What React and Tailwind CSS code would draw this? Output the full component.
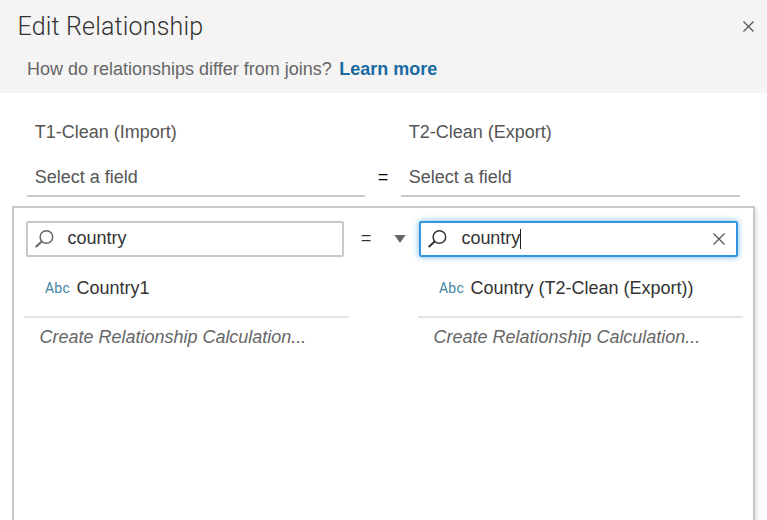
function Search({ className }) {
  return (
    <svg className={className} width="20" height="20" viewBox="0 0 20 20" fill="none" stroke="currentColor">
      <circle cx="12.4" cy="8" r="6.3" strokeWidth="1.5" />
      <path d="M8 12.2 L1.7 18" strokeWidth="2" />
    </svg>
  );
}

function Close({ size, width = 1.3 }) {
  return (
    <svg width={size} height={size} viewBox="0 0 12 12" fill="none" stroke="#555" strokeWidth={width} className="block">
      <path d="M.5 .5 L11.5 11.5 M11.5 .5 L.5 11.5" />
    </svg>
  );
}

function Results({ name, className }) {
  return (
    <div className={"w-[325px] " + className}>
      <div className="flex h-[59px] items-center border-b-2 border-[#e4e4e4] pl-[21px] pt-px">
        <span className="w-[31.5px] font-['Roboto',sans-serif] text-[14px] tracking-[0.2px] text-[#3f83a3]">Abc</span>
        <span className="text-[18px] text-[#333]">{name}</span>
      </div>
      <div className="pl-[15.5px] pt-[6px] text-[18px] leading-[26px] tracking-[-0.01px] italic text-[#666]">Create Relationship Calculation...</div>
    </div>
  );
}

function Field({ table, className }) {
  return (
    <div className={"h-[104px] border-b-2 border-[#c9c9c9] pl-[7.7px] pt-[26px] text-[18px] text-[#555] " + className}>
      <div className="leading-[26px]">{table}</div>
      <div className="mt-[19px] leading-[26px]">Select a field</div>
    </div>
  );
}

export default function App() {
  return (
    <div className="flex h-[520px] w-[767px] flex-col overflow-hidden whitespace-nowrap bg-white font-['Liberation_Sans',sans-serif]">
      <header className="h-[93px] shrink-0 bg-[#f4f4f4]">
        <div className="flex items-center justify-between pl-[17.5px] pr-[13px] pt-[10px]">
          <h1 className="font-['Roboto',sans-serif] text-[25px] leading-[30px] pt-[2px] font-light tracking-[0.18px] text-[#333]">Edit Relationship</h1>
          <Close size={11} width={1.3} />
        </div>
        <p className="pl-[27px] pt-[14px] text-[18px] leading-[26px] text-[#666]">
          How do relationships differ from joins?
          <span className="ml-[7.5px] font-bold text-[#1a6aa3]">Learn more</span>
        </p>
      </header>
      <section className="flex shrink-0 pl-[27px]">
        <Field table="T1-Clean (Import)" className="w-[338px]" />
        <div className="w-9 pt-[71px] text-center text-[18px] leading-[26px] text-black">=</div>
        <Field table="T2-Clean (Export)" className="w-[339px]" />
      </section>
      <section className="ml-3 mt-[9px] h-[340px] w-[743px] shrink-0 border-2 border-[#c8c8c8] bg-white pt-[13px] shadow-[2px_2px_4px_rgba(0,0,0,0.12)]">
        <div className="flex items-center pl-3">
          <div className="flex h-9 w-[318px] items-center rounded-[2px] border-2 border-[#c8c8c8] pl-[6px]">
            <Search className="text-[#666]" />
            <span className="ml-[13.5px] pb-px text-[18px] text-[#333]">country</span>
          </div>
          <div className="w-[44px] pb-px text-center text-[18px] text-[#333]">=</div>
          <svg width="12" height="8" className="ml-[6px] mr-[13px]"><path d="M0.4 0H11.6L6 8Z" fill="#666" /></svg>
          <div className="flex h-9 w-[319px] items-center rounded-[2px] border-2 border-[#3395dd] pl-[6px] pr-[11px] shadow-[0_0_6px_rgba(51,149,221,0.7)]">
            <Search className="text-[#333]" />
            <span className="ml-[14.5px] pb-px text-[18px] tracking-[-0.05px] text-[#333]">country</span>
            <i className="h-5 w-px bg-[#222]" />
            <span className="ml-auto"><Close size={12} /></span>
          </div>
        </div>
        <div className="mt-[2px] flex pl-[10px]">
          <Results name="Country1" className="mr-[69px]" />
          <Results name="Country (T2-Clean (Export))" className="" />
        </div>
      </section>
    </div>
  );
}
